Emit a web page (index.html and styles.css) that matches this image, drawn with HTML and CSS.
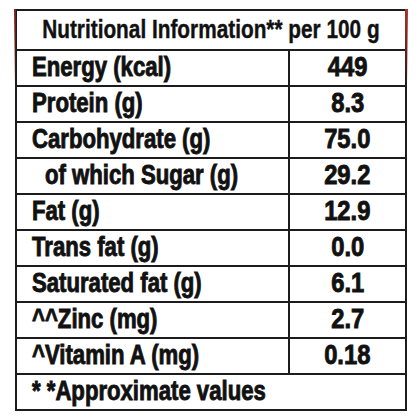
FILE: index.html
```html
<!doctype html>
<html lang="en">

<head>
    <meta charset="utf-8">
    <title>Nutritional Information</title>
    <meta name="viewport" content="width=device-width, initial-scale=1">
    <link rel="stylesheet" href="styles.css">
</head>

<body>
    <div class="label">
        <table class="nutri">
            <colgroup>
                <col class="nutri__col-name">
                <col class="nutri__col-val">
            </colgroup>
            <tr class="nutri__head">
                <th colspan="2"><div class="cell"><span>Nutritional Information** per 100 g</span></div></th>
            </tr>
            <tr>
                <td><div class="cell"><span>Energy (kcal)</span></div></td>
                <td class="nutri__val"><div class="cell"><span>449</span></div></td>
            </tr>
            <tr>
                <td><div class="cell"><span>Protein (g)</span></div></td>
                <td class="nutri__val"><div class="cell"><span>8.3</span></div></td>
            </tr>
            <tr>
                <td><div class="cell"><span>Carbohydrate (g)</span></div></td>
                <td class="nutri__val"><div class="cell"><span>75.0</span></div></td>
            </tr>
            <tr>
                <td class="nutri__sub"><div class="cell"><span>of which Sugar (g)</span></div></td>
                <td class="nutri__val"><div class="cell"><span>29.2</span></div></td>
            </tr>
            <tr>
                <td><div class="cell"><span>Fat (g)</span></div></td>
                <td class="nutri__val"><div class="cell"><span>12.9</span></div></td>
            </tr>
            <tr>
                <td><div class="cell"><span>Trans fat (g)</span></div></td>
                <td class="nutri__val"><div class="cell"><span>0.0</span></div></td>
            </tr>
            <tr>
                <td><div class="cell"><span>Saturated fat (g)</span></div></td>
                <td class="nutri__val"><div class="cell"><span>6.1</span></div></td>
            </tr>
            <tr>
                <td><div class="cell"><span>^^Zinc (mg)</span></div></td>
                <td class="nutri__val"><div class="cell"><span>2.7</span></div></td>
            </tr>
            <tr>
                <td><div class="cell"><span>^Vitamin A (mg)</span></div></td>
                <td class="nutri__val"><div class="cell"><span>0.18</span></div></td>
            </tr>
            <tr>
                <td colspan="2"><div class="cell"><span>* *Approximate values</span></div></td>
            </tr>
        </table>
    </div>
</body>

</html>
```

FILE: styles.css
```css
* {
    padding: 0;
    margin: 0;
}

body {
    background: #fff;
    font-family: "Liberation Sans", Arial, sans-serif;
    font-weight: bold;
    color: #111;
}

.label {
    position: relative;
    padding: 9px 0 0 15px;
}

/* reddish tint left over from the pack print */
.label:before,
.label:after {
    content: "";
    position: absolute;
    top: 9px;
    width: 2px;
    height: 75px;
    background: linear-gradient(#7a2418, rgba(160, 40, 30, 0));
}

.label:before {
    left: 14px;
}

.label:after {
    left: 405px;
    width: 3px;
    background: linear-gradient(#a8322a, rgba(200, 60, 50, 0));
}

.nutri {
    border-collapse: collapse;
    table-layout: fixed;
    width: 390px;
}

.nutri__col-name {
    width: 273px;
}

.nutri__col-val {
    width: 117px;
}

.nutri th,
.nutri td {
    border: 2px solid #1c1c1c;
    height: 34px;
    font-size: 27px;
    line-height: 30px;
    text-align: left;
    padding: 0 0 0 15px;
    overflow: visible;
    white-space: nowrap;
}

.cell {
    display: flex;
    justify-content: flex-start;
}

.cell span {
    display: inline-block;
    transform: scaleX(0.82);
    transform-origin: left center;
    -webkit-text-stroke: 0.9px #111;
    margin-top: -2px;
}

.nutri__head th {
    height: 38px;
    font-size: 26px;
    padding: 0;
}

.nutri__head .cell,
.nutri__val .cell {
    justify-content: center;
}

.nutri__head .cell span,
.nutri__val .cell span {
    transform-origin: center center;
}

.nutri__head .cell span {
    transform: scaleX(0.8);
    -webkit-text-stroke: 0.4px #111;
}

.nutri__val .cell span {
    transform: scaleX(0.88);
}

.nutri td.nutri__sub {
    padding-left: 28px;
}

.nutri td.nutri__val {
    padding: 0;
}
```
